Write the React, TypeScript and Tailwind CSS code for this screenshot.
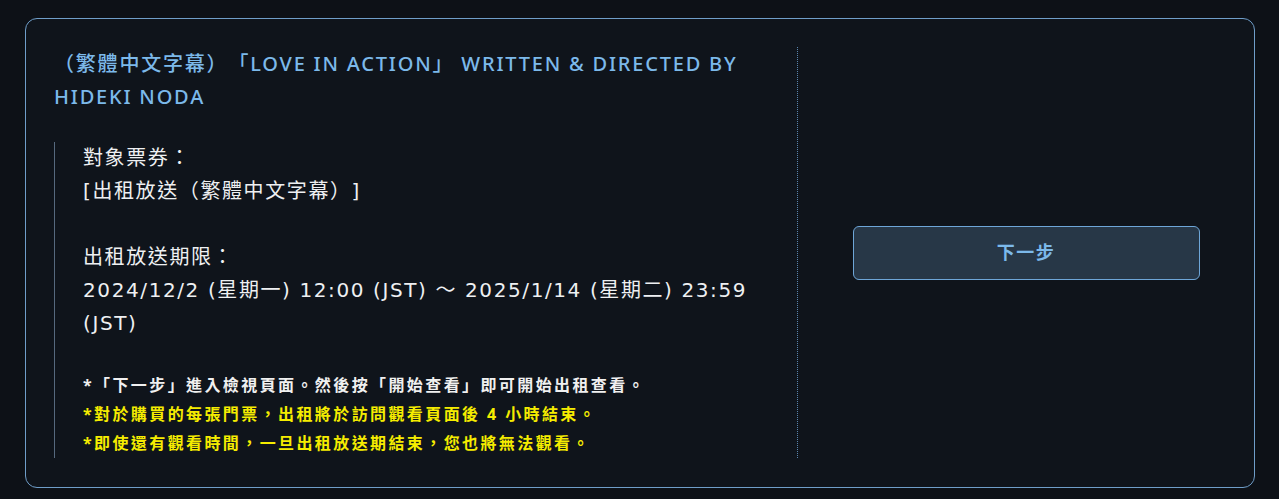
import React from 'react';

const notes = [
  { text: '*「下一步」進入檢視頁面。然後按「開始查看」即可開始出租查看。', tone: 'text-[#f0f0f0]' },
  { text: '*對於購買的每張門票，出租將於訪問觀看頁面後 4 小時結束。', tone: 'text-[#f5ec00]' },
  { text: '*即使還有觀看時間，一旦出租放送期結束，您也將無法觀看。', tone: 'text-[#f5ec00]' },
];

export default function App() {
  return (
    <div
      className="min-h-[499px] w-full bg-[#0d1117] pl-[25px] pr-[24px] pt-[18px] [text-spacing-trim:space-all]"
      style={{ fontFamily: '"Noto Sans", "Noto Sans CJK TC", sans-serif' }}
    >
      <div className="flex rounded-[12px] border border-[#6f9ec9] bg-[#0f141b] pt-[28px] pb-[29px] pl-[28px]">
        {/* left: ticket info */}
        <div className="w-[744px] shrink-0 border-r border-dotted border-[#5a85ad] pr-[24px]">
          <h1 className="text-[20px] font-medium uppercase leading-[33px] tracking-[0.09em] text-[#7cb9ea]">
            （繁體中文字幕）「LOVE IN ACTION」 WRITTEN &amp; DIRECTED BY HIDEKI NODA
          </h1>

          <div className="mt-[29px] border-l border-[#56697e] pl-[28px]">
            <div className="font-['DejaVu_Sans','Noto_Sans_CJK_TC',sans-serif] text-[20px] leading-[33px] tracking-[0.08em] text-[#eef0f2]">
              <p>對象票券：</p>
              <p>[出租放送（繁體中文字幕）]</p>
              <p className="mt-[33px]">出租放送期限：</p>
              <p>2024/12/2 (星期一) 12:00 (JST) ～ 2025/1/14 (星期二) 23:59 (JST)</p>
            </div>
            <div className="mt-[31px] text-[16px] font-bold leading-[29px] tracking-[0.15em]">
              {notes.map((n) => (
                <p key={n.text} className={n.tone}>
                  {n.text}
                </p>
              ))}
            </div>
          </div>
        </div>

        {/* right: action */}
        <div className="flex flex-1 items-center justify-center">
          <button
            type="button"
            className="h-[54px] w-[347px] rounded-[6px] border border-[#6ea6d8] bg-[#273747] text-[18px] font-bold tracking-[0.08em] text-[#7cb9ea]"
          >
            下一步
          </button>
        </div>
      </div>
    </div>
  );
}
